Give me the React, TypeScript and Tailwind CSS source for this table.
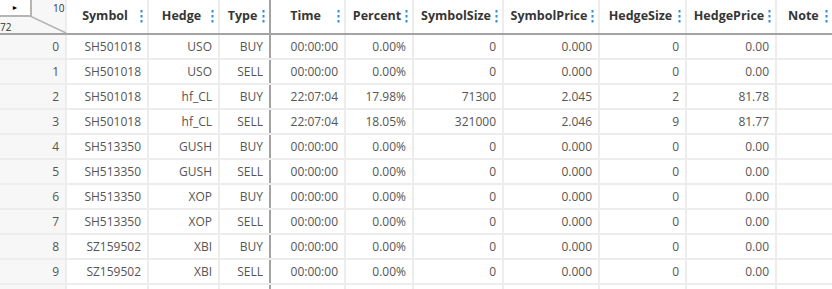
import React from 'react';

type Row = {
  symbol: string;
  hedge: string;
  type: string;
  time: string;
  percent: string;
  symbolSize: string;
  symbolPrice: string;
  hedgeSize: string;
  hedgePrice: string;
};

const ROWS: Row[] = [
  { symbol: 'SH501018', hedge: 'USO', type: 'BUY', time: '00:00:00', percent: '0.00%', symbolSize: '0', symbolPrice: '0.000', hedgeSize: '0', hedgePrice: '0.00' },
  { symbol: 'SH501018', hedge: 'USO', type: 'SELL', time: '00:00:00', percent: '0.00%', symbolSize: '0', symbolPrice: '0.000', hedgeSize: '0', hedgePrice: '0.00' },
  { symbol: 'SH501018', hedge: 'hf_CL', type: 'BUY', time: '22:07:04', percent: '17.98%', symbolSize: '71300', symbolPrice: '2.045', hedgeSize: '2', hedgePrice: '81.78' },
  { symbol: 'SH501018', hedge: 'hf_CL', type: 'SELL', time: '22:07:04', percent: '18.05%', symbolSize: '321000', symbolPrice: '2.046', hedgeSize: '9', hedgePrice: '81.77' },
  { symbol: 'SH513350', hedge: 'GUSH', type: 'BUY', time: '00:00:00', percent: '0.00%', symbolSize: '0', symbolPrice: '0.000', hedgeSize: '0', hedgePrice: '0.00' },
  { symbol: 'SH513350', hedge: 'GUSH', type: 'SELL', time: '00:00:00', percent: '0.00%', symbolSize: '0', symbolPrice: '0.000', hedgeSize: '0', hedgePrice: '0.00' },
  { symbol: 'SH513350', hedge: 'XOP', type: 'BUY', time: '00:00:00', percent: '0.00%', symbolSize: '0', symbolPrice: '0.000', hedgeSize: '0', hedgePrice: '0.00' },
  { symbol: 'SH513350', hedge: 'XOP', type: 'SELL', time: '00:00:00', percent: '0.00%', symbolSize: '0', symbolPrice: '0.000', hedgeSize: '0', hedgePrice: '0.00' },
  { symbol: 'SZ159502', hedge: 'XBI', type: 'BUY', time: '00:00:00', percent: '0.00%', symbolSize: '0', symbolPrice: '0.000', hedgeSize: '0', hedgePrice: '0.00' },
  { symbol: 'SZ159502', hedge: 'XBI', type: 'SELL', time: '00:00:00', percent: '0.00%', symbolSize: '0', symbolPrice: '0.000', hedgeSize: '0', hedgePrice: '0.00' },
];

// column widths up to each grid line
const COLS: { key: keyof Row; label: string; w: string; frozenEdge?: boolean }[] = [
  { key: 'symbol', label: 'Symbol', w: 'w-[82px]' },
  { key: 'hedge', label: 'Hedge', w: 'w-[71px]' },
  { key: 'type', label: 'Type', w: 'w-[51px]', frozenEdge: true },
  { key: 'time', label: 'Time', w: 'w-[75px]' },
  { key: 'percent', label: 'Percent', w: 'w-[68px]' },
  { key: 'symbolSize', label: 'SymbolSize', w: 'w-[90px]' },
  { key: 'symbolPrice', label: 'SymbolPrice', w: 'w-[96px]' },
  { key: 'hedgeSize', label: 'HedgeSize', w: 'w-[87px]' },
  { key: 'hedgePrice', label: 'HedgePrice', w: 'w-[90px]' },
];

function Kebab() {
  return (
    <svg width="3" height="13" viewBox="0 0 3 13" className="absolute right-[4px] top-[10px]">
      <rect x="0.5" y="0" width="2" height="2.5" fill="#2e8dd3" />
      <rect x="0.5" y="5" width="2" height="2.5" fill="#2e8dd3" />
      <rect x="0.5" y="10" width="2" height="2.5" fill="#2e8dd3" />
    </svg>
  );
}

function HeaderCell({ label, w, frozenEdge }: { label: string; w: string; frozenEdge?: boolean }) {
  return (
    <div
      className={`relative shrink-0 h-full flex items-center justify-center ${w} ${
        frozenEdge ? 'border-r-2 border-[#a3a3a3]' : 'border-r-2 border-[#ededed]'
      }`}
    >
      <span className="text-[12.5px] font-bold text-[#363636] pr-[4px]">{label}</span>
      <Kebab />
    </div>
  );
}

function Corner() {
  return (
    <div className="relative shrink-0 w-[67px] h-full bg-[#f7f7f7] border-r-2 border-[#ededed]">
      <div className="absolute left-0 top-0 w-[32px] h-[17px] border-r-2 border-b-2 border-[#b5b5b5] bg-white flex items-center justify-center">
        <span className="text-[7px] leading-none text-black">►</span>
      </div>
      <span className="absolute left-[53px] top-[1px] text-[10px] text-[#333]">10</span>
      <span className="absolute left-0 top-[20px] text-[10px] text-[#333]">72</span>
      <svg className="absolute left-0 top-0" width="67" height="33" viewBox="0 0 67 33">
        <line x1="31" y1="16.5" x2="66" y2="33" stroke="#b5b5b5" strokeWidth="1.5" />
      </svg>
    </div>
  );
}

export default function App() {
  return (
    <div
      className="w-[832px] h-[289px] overflow-hidden bg-white text-[#555]"
      style={{ fontFamily: '"Open Sans", "Liberation Sans", sans-serif' }}
    >
      {/* header */}
      <div className="flex h-[35px] border-b-2 border-[#a3a3a3] bg-white">
        <Corner />
        {COLS.map((c) => (
          <HeaderCell key={c.key} label={c.label} w={c.w} frozenEdge={c.frozenEdge} />
        ))}
        <div className="relative shrink-0 w-[80px] h-full flex items-center">
          <span className="text-[12.5px] font-bold text-[#363636] pl-[11px]">Note</span>
          <svg width="3" height="13" viewBox="0 0 3 13" className="absolute left-[48px] top-[10px]">
            <rect x="0.5" y="0" width="2" height="2.5" fill="#2e8dd3" />
            <rect x="0.5" y="5" width="2" height="2.5" fill="#2e8dd3" />
            <rect x="0.5" y="10" width="2" height="2.5" fill="#2e8dd3" />
          </svg>
        </div>
      </div>

      {/* body */}
      {[...ROWS, null].map((r, i) => (
        <div key={i} className="flex h-[25px] border-b-2 border-[#ededed] text-[12px]">
          <div className="shrink-0 w-[67px] h-full bg-[#f7f7f7] border-r-2 border-[#ededed] flex items-center justify-end pr-[6px]">
            {r ? i : ''}
          </div>
          {COLS.map((c) => (
            <div
              key={c.key}
              className={`shrink-0 h-full flex items-center justify-end pr-[6px] ${c.w} ${
                c.frozenEdge ? 'border-r-2 border-[#a3a3a3]' : 'border-r-2 border-[#ededed]'
              }`}
            >
              {r ? r[c.key] : ''}
            </div>
          ))}
          <div className="shrink-0 w-[80px] h-full" />
        </div>
      ))}
    </div>
  );
}
